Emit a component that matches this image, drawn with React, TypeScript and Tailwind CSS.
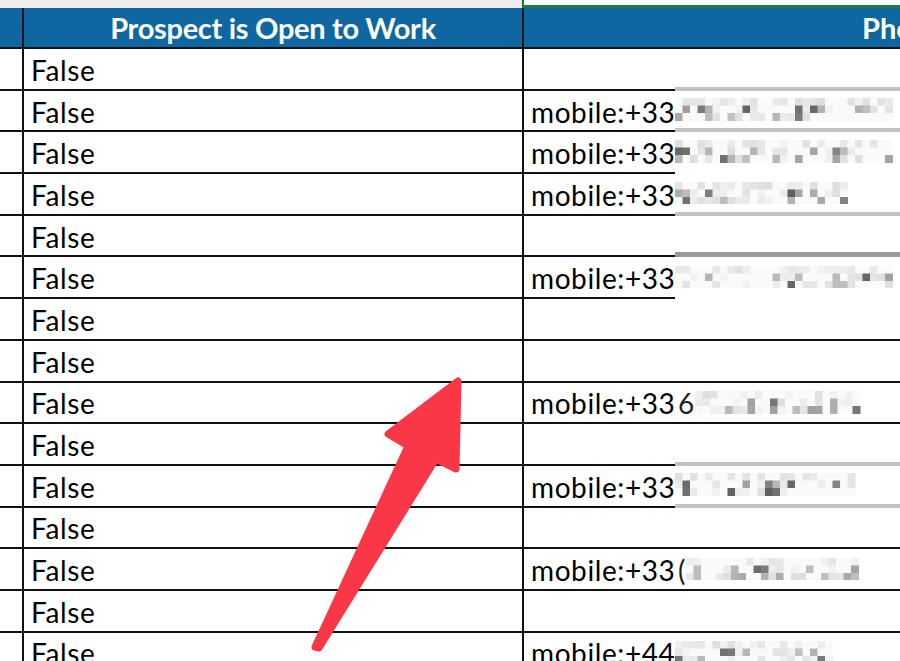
import React from "react"

type Band = "none" | "black" | "light" | "dark"

type Row = {
  phone?: string
  lead?: string
  redact?: number
  seed?: number
  bottom: Band
}

const rows: Row[] = [
  { bottom: "light" },
  { phone: "mobile:+33", redact: 223, seed: 3, bottom: "light" },
  { phone: "mobile:+33", redact: 223, seed: 7, bottom: "none" },
  { phone: "mobile:+33", redact: 178, seed: 11, bottom: "light" },
  { bottom: "dark" },
  { phone: "mobile:+33", redact: 223, seed: 5, bottom: "none" },
  { bottom: "black" },
  { bottom: "black" },
  { phone: "mobile:+33", lead: "6", redact: 168, seed: 13, bottom: "black" },
  { bottom: "light" },
  { phone: "mobile:+33", redact: 182, seed: 17, bottom: "light" },
  { bottom: "black" },
  { phone: "mobile:+33", lead: "(", redact: 175, seed: 19, bottom: "black" },
  { bottom: "black" },
  { phone: "mobile:+44", redact: 160, seed: 23, bottom: "black" },
]

const bandClass: Record<Band, string> = {
  none: "border-b-[3px] border-transparent",
  black: "border-b-2 border-[#111]",
  light: "border-b-[4px] border-[#c2c2c2]",
  dark: "border-b-[5px] border-[#9a9a9a]",
}

// pixelated blur squares over the phone digits
function Redact({ width, seed }: { width: number; seed: number }) {
  const cell = 7.5
  const cols = Math.floor(width / cell)
  let s = seed * 9301 + 49297
  const rnd = () => {
    s = (s * 9301 + 49297) % 233280
    return s / 233280
  }
  const rects = []
  for (let r = 0; r < 3; r++) {
    for (let c = 0; c < cols; c++) {
      const v = rnd()
      const onDigit = c % 3 !== 2 && r !== 0
      let g = 250
      if (v > 0.88 && onDigit) g = 95 + Math.floor(rnd() * 40)
      else if (v > 0.65 && onDigit) g = 160 + Math.floor(rnd() * 35)
      else if (v > 0.45) g = 222 + Math.floor(rnd() * 22)
      rects.push(
        <rect
          key={r + "-" + c}
          x={c * cell}
          y={r * cell}
          width={cell + 0.5}
          height={cell + 0.5}
          fill={`rgb(${g},${g},${g})`}
        />
      )
    }
  }
  return (
    <svg width={width} height={cell * 3} className="shrink-0 blur-[0.6px]">
      {rects}
    </svg>
  )
}

export default function App() {
  const font = "font-['Lato','Liberation_Sans',sans-serif]"

  return (
    <div className={`relative w-[900px] h-[661px] overflow-hidden bg-white ${font}`}>
      {/* row above the header */}
      <div className="flex h-[8px]">
        <div className="w-[522px] bg-[#eeeeee] border-r border-[#dcdcdc]" />
        <div className="flex-1 bg-white border-l-2 border-b-[3px] border-[#1f7a43]" />
      </div>

      {/* header */}
      <div className="flex h-[41px] bg-[#0e67a0] border-b-2 border-[#111] text-white font-bold text-[29px] leading-none">
        <div className="w-[24px] border-r-2 border-[#111]" />
        <div className="w-[500px] border-r-2 border-[#111] flex items-center justify-center tracking-[-0.3px]">
          Prospect is Open to Work
        </div>
        <div className="flex-1 flex items-center pl-[338px] whitespace-nowrap overflow-hidden">
          Phone
        </div>
      </div>

      {/* data rows */}
      {rows.map((row, i) => (
        <div key={i} className="flex h-[41.7px] text-[28px] tracking-[0.6px] text-black leading-none">
          <div className="w-[24px] border-r-2 border-b-2 border-[#111]" />
          <div className="w-[500px] border-r-2 border-b-2 border-[#111] flex items-center pl-[7px] pt-[2px]">
            False
          </div>
          <div className="w-[151px] border-b-2 border-[#111] flex items-center pl-[7px] pt-[2px] whitespace-nowrap">
            {row.phone}
          </div>
          <div className={`flex-1 flex items-center overflow-hidden ${bandClass[row.bottom]}`}>
            {row.lead && <span className="pl-[3px] pt-[2px] text-[#222]">{row.lead}</span>}
            {row.redact && <Redact width={row.redact} seed={row.seed ?? 1} />}
          </div>
        </div>
      ))}

      {/* red annotation arrow */}
      <svg
        className="absolute left-0 top-0 pointer-events-none"
        width={900}
        height={661}
        viewBox="0 0 900 661"
      >
        <path
          d="M458 381 L456 469 L436 459 L319 648 L315 647 L408 446 L388 434 Z"
          fill="#fa3747"
          stroke="#fa3747"
          strokeWidth={7}
          strokeLinejoin="round"
        />
      </svg>
    </div>
  )
}
